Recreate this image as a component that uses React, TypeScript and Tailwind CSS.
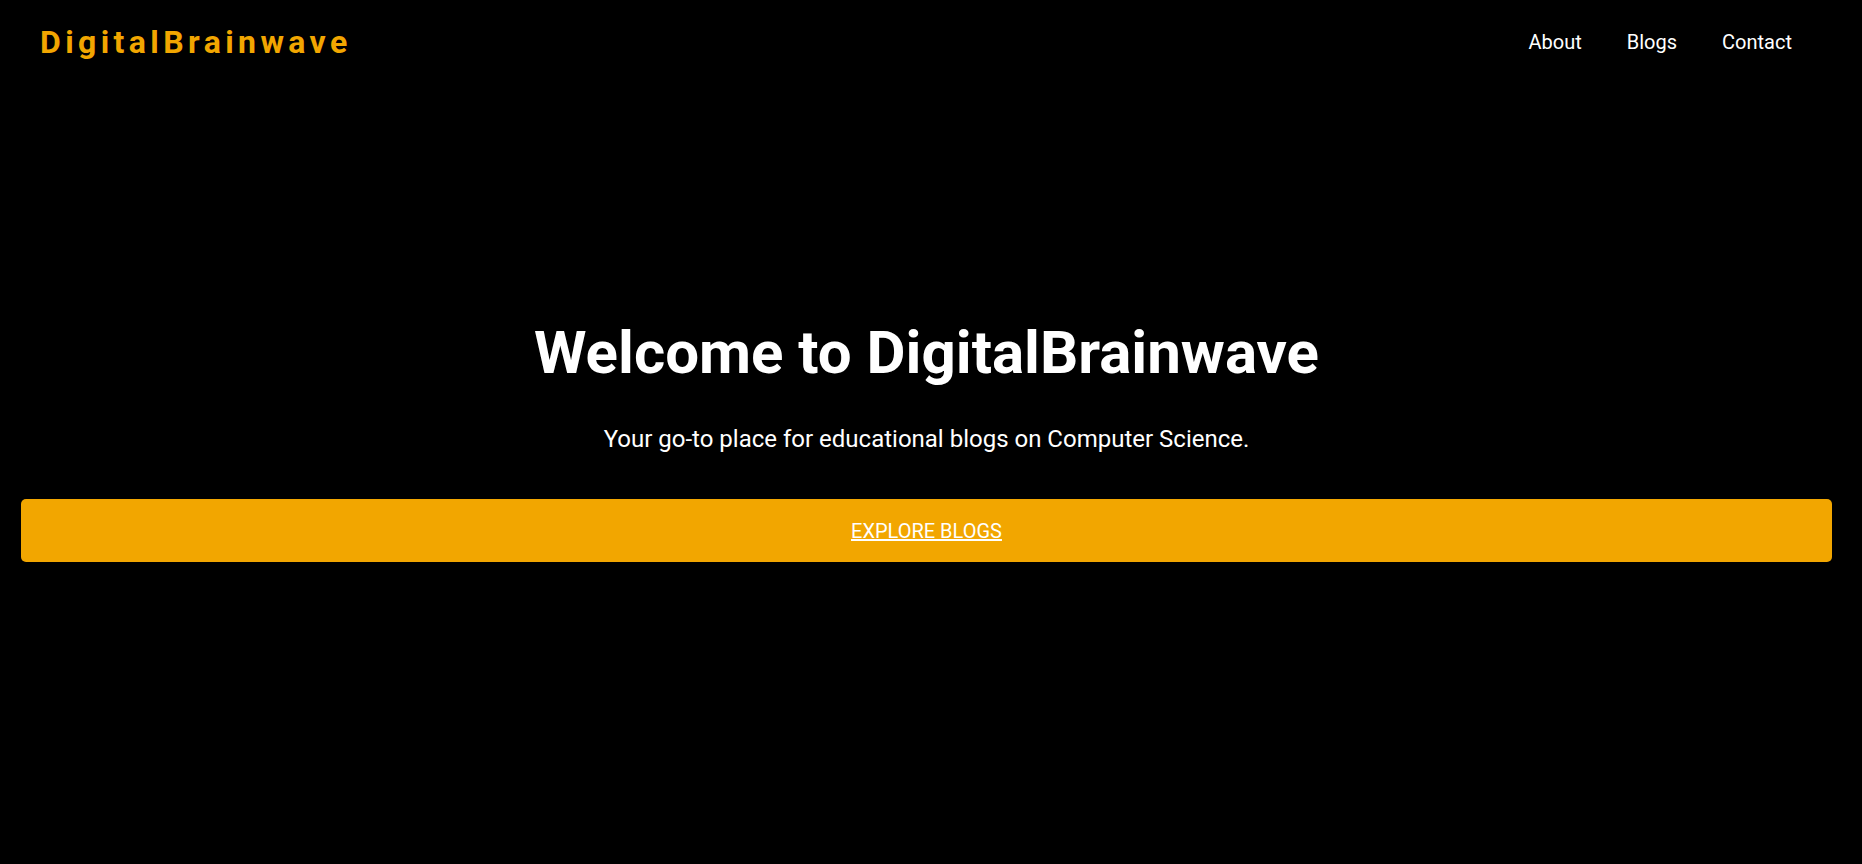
export default function App() {
  return (
    <div className="min-h-screen bg-black text-white font-['Roboto',sans-serif]">
      <header className="flex h-[83px] items-center justify-between pl-[40px] pr-[70px]">
        <div className="text-[32px] font-bold tracking-[4.4px] text-[#f2a600]">DigitalBrainwave</div>
        <nav className="flex items-center gap-[45px] text-[20px]">
          <a href="#about">About</a>
          <a href="#blogs">Blogs</a>
          <a href="#contact">Contact</a>
        </nav>
      </header>

      <main className="pl-[21px] pr-[30px]">
        <section className="flex flex-col items-center pt-[234px] text-center">
          <h1 className="text-[60px] font-bold leading-[72px]">Welcome to DigitalBrainwave</h1>
          <p className="mt-[34px] text-[24px] leading-[32px]">
            Your go-to place for educational blogs on Computer Science.
          </p>
        </section>

        <a
          href="#blogs"
          className="mt-[44px] flex h-[63px] w-full items-center justify-center rounded-[5px] bg-[#f2a600] text-[20px] text-white underline"
        >
          EXPLORE BLOGS
        </a>
      </main>
    </div>
  );
}
